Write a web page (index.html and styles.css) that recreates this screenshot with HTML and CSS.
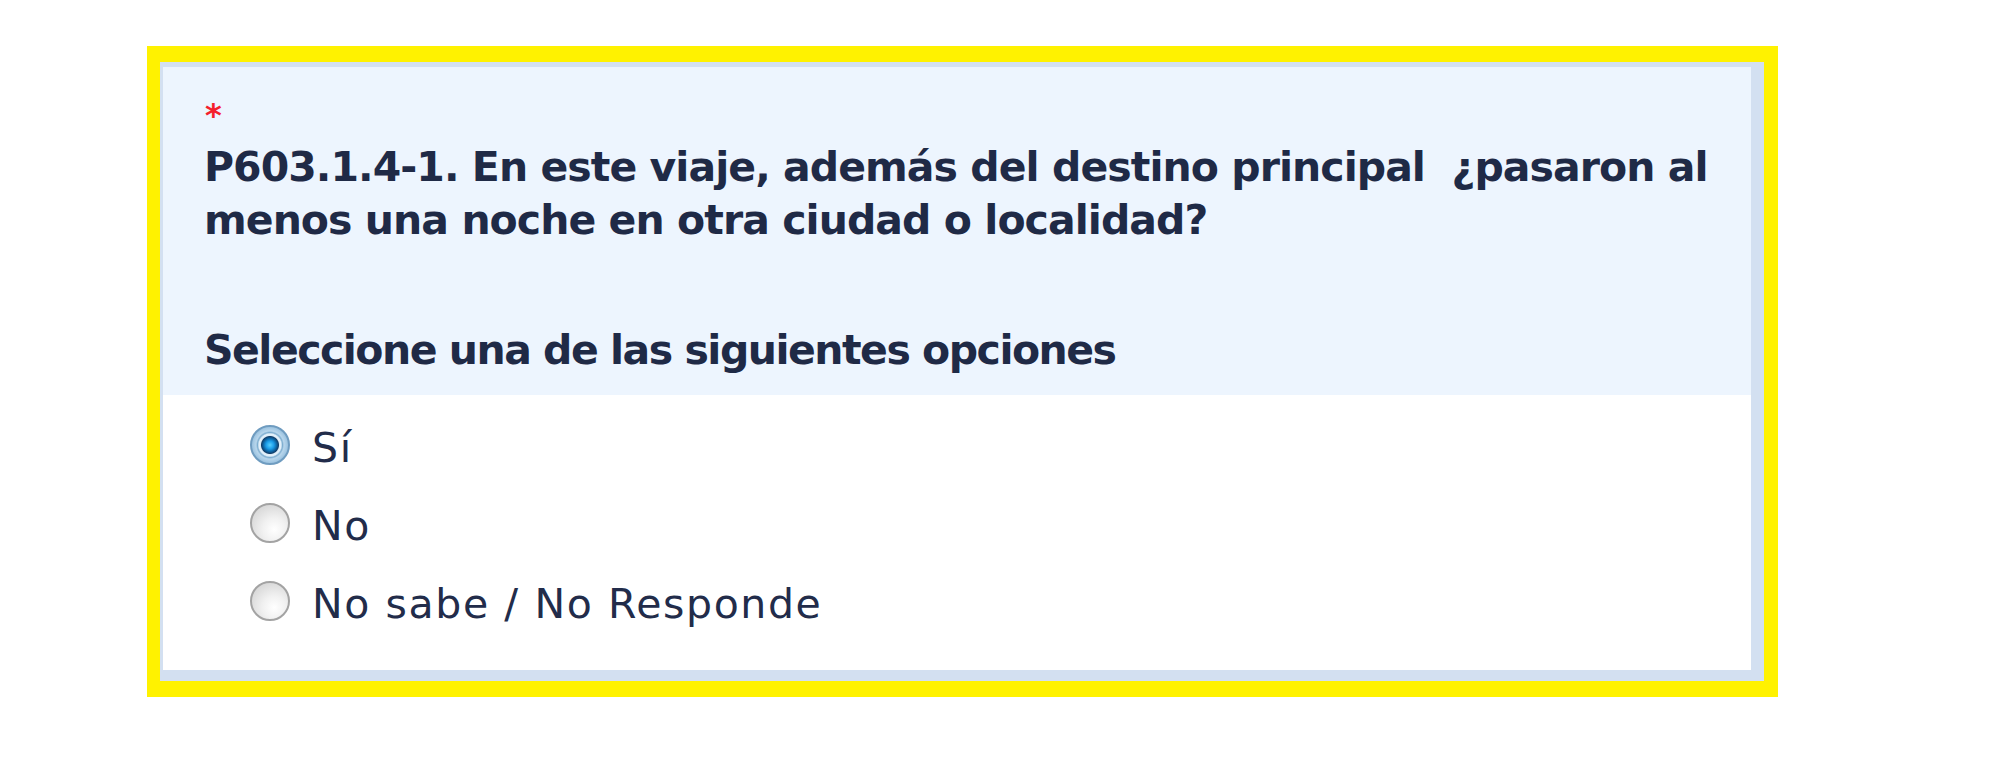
FILE: index.html
```html
<!DOCTYPE html>
<html lang="es">
<head>
<meta charset="utf-8">
<title>P603.1.4-1</title>
<link rel="stylesheet" href="styles.css">
</head>
<body>
<div class="page">
  <div class="frame">
    <div class="question">
      <div class="qhead">
        <div class="req">*</div>
        <div class="qtext">P603.1.4-1. En este viaje, además del destino principal&nbsp; ¿pasaron al menos una noche en otra ciudad o localidad?</div>
        <div class="hint">Seleccione una de las siguientes opciones</div>
      </div>
      <div class="options">
        <label class="opt"><input type="radio" name="p603" checked><span class="lbl">Sí</span></label>
        <label class="opt"><input type="radio" name="p603"><span class="lbl">No</span></label>
        <label class="opt"><input type="radio" name="p603"><span class="lbl">No sabe / No Responde</span></label>
      </div>
    </div>
  </div>
</div>
</body>
</html>
```

FILE: styles.css
```css
html, body {
  margin: 0;
  padding: 0;
  background: #ffffff;
}
.page {
  padding: 46px 0 0 147px;
  font-family: "DejaVu Sans", Verdana, sans-serif;
  color: #1f2a46;
}
.frame {
  width: 1604px;
  border-style: solid;
  border-color: #fff200;
  border-width: 16px 14px 16px 13px;
}
.question {
  border-style: solid;
  border-color: #d3e0f1;
  border-width: 5px 13px 11px 3px;
  background: #ffffff;
}
.qhead {
  background: #edf5fe;
  padding: 23px 20px 18px 41px;
}
.req {
  color: #f4202c;
  font-size: 32px;
  font-weight: bold;
  line-height: 51px;
  padding-left: 1px;
}
.qtext {
  font-size: 41px;
  font-weight: bold;
  line-height: 53px;
  letter-spacing: -0.95px;
}
.hint {
  margin-top: 77px;
  font-size: 41px;
  font-weight: bold;
  line-height: 53px;
  letter-spacing: -1.5px;
}
.options {
  padding: 14px 0 27px 87px;
  display: flex;
  flex-direction: column;
}
.opt {
  display: flex;
  align-items: center;
  height: 78px;
}
.opt input {
  -webkit-appearance: none;
  appearance: none;
  margin: 0 22px 0 0;
  width: 40px;
  height: 40px;
  border-radius: 50%;
  box-sizing: border-box;
  border: 2px solid #a3a3a3;
  background: radial-gradient(circle at 62% 68%, #ffffff 0%, #f1f1f1 35%, #d4d4d4 85%);
  position: relative;
  top: -3px;
}
.opt input:checked {
  border: 2px solid #6f9cc0;
  background: radial-gradient(circle at 50% 50%,
    #58d0ff 0px, #1a9ce8 4px, #0d5e9a 7px, #123f6a 8.5px,
    #dcecf7 9.5px, #e6f2fb 11px, #7eaed0 12.5px, #b8d6ec 14px, #9cc3e0 18px);
}
.lbl {
  font-size: 41px;
  line-height: 78px;
  letter-spacing: 1.6px;
  color: #222c4a;
}
```
